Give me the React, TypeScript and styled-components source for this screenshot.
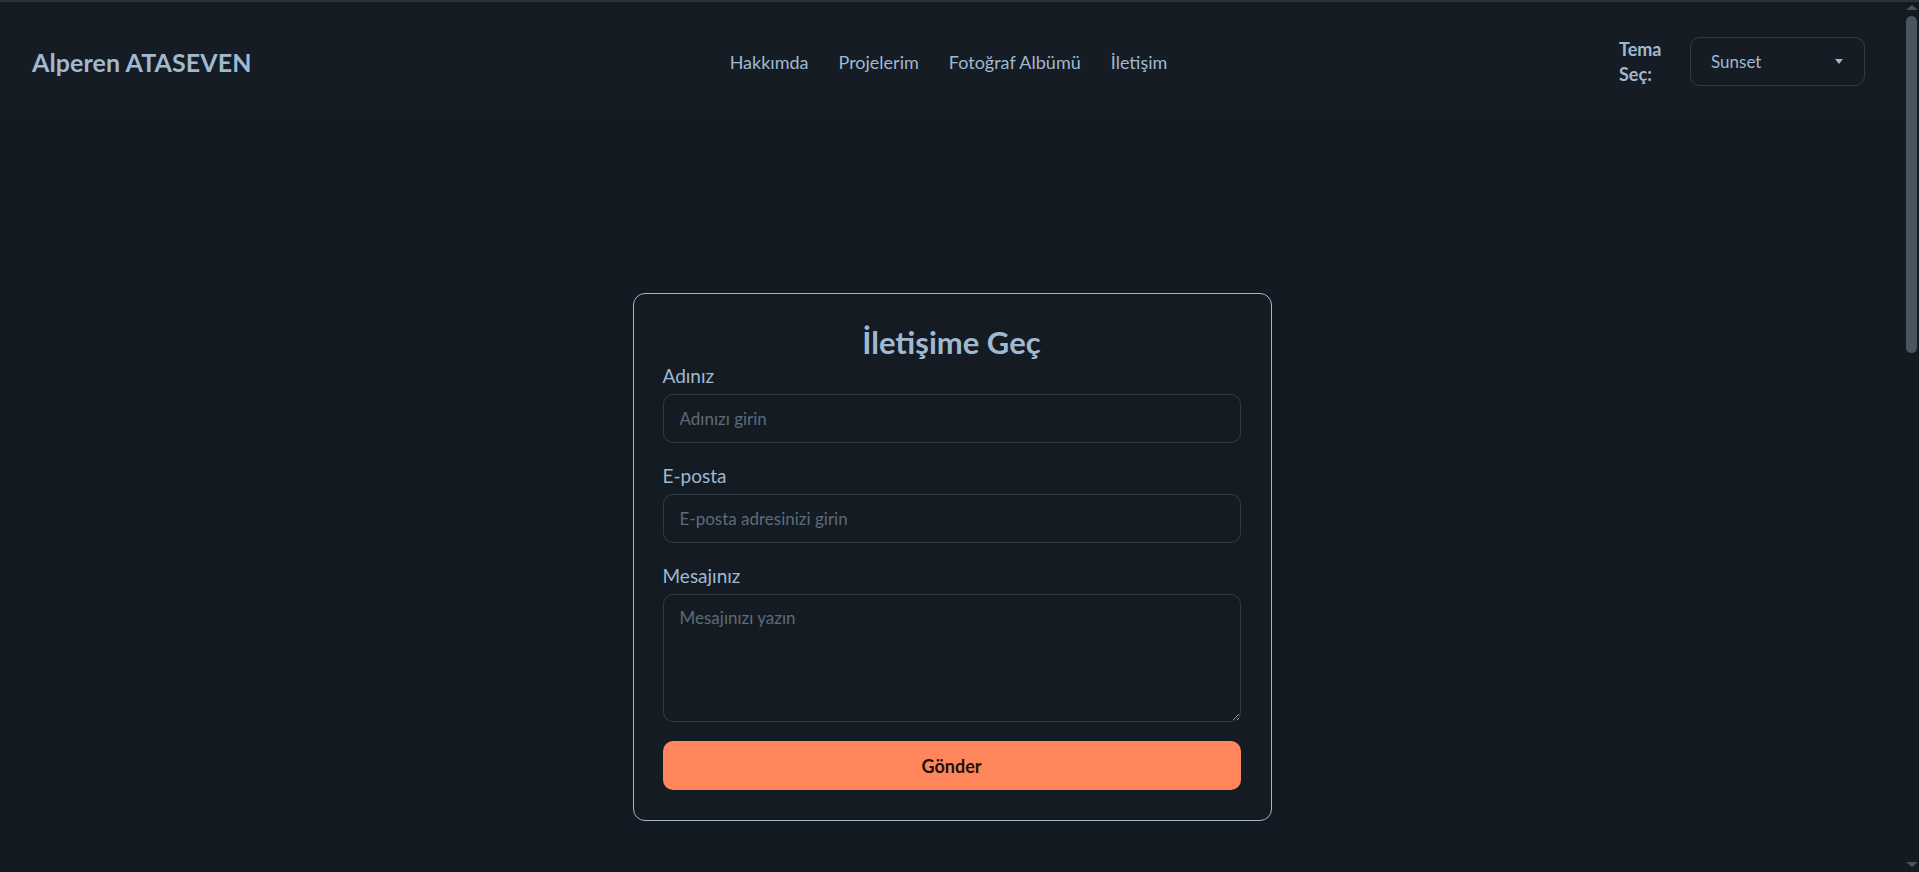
import styled, { createGlobalStyle } from "styled-components";

const GlobalStyle = createGlobalStyle`
  html,
  body {
    margin: 0;
    background: #131a21;
    color-scheme: dark;
  }

  body {
    color: #9fb9d1;
    font-family: "Lato", "Noto Sans", sans-serif;
  }

  * {
    box-sizing: border-box;
  }
`;

const NAV_LINKS = ["Hakkımda", "Projelerim", "Fotoğraf Albümü", "İletişim"];

const FIELDS = [
  { label: "Adınız", placeholder: "Adınızı girin", type: "text" },
  { label: "E-posta", placeholder: "E-posta adresinizi girin", type: "email" },
];

export default function App() {
  return (
    <>
      <GlobalStyle />
      <Frame>
        <Site>
          <Header>
            <Logo>Alperen ATASEVEN</Logo>

            <Nav>
              {NAV_LINKS.map((link) => (
                <NavLink key={link}>{link}</NavLink>
              ))}
            </Nav>

            <ThemePicker>
              <ThemeLabel>Tema Seç:</ThemeLabel>
              <ThemeSelect>
                <span>Sunset</span>
                <Caret />
              </ThemeSelect>
            </ThemePicker>
          </Header>

          <Main>
            <Card>
              <Title>İletişime Geç</Title>

              {FIELDS.map((field) => (
                <Field key={field.label}>
                  <Label>{field.label}</Label>
                  <Input type={field.type} placeholder={field.placeholder} />
                </Field>
              ))}

              <Field>
                <Label>Mesajınız</Label>
                <TextArea placeholder="Mesajınızı yazın" />
              </Field>

              <SubmitButton type="button">Gönder</SubmitButton>
            </Card>
          </Main>
        </Site>

        <ScrollBar>
          <ScrollArrow $dir="up" />
          <ScrollTrack>
            <ScrollThumb />
          </ScrollTrack>
          <ScrollArrow $dir="down" />
        </ScrollBar>
      </Frame>
    </>
  );
}

const Frame = styled.div`
  display: flex;
  height: 100vh;
  overflow: hidden;
  border-top: 2px solid #2f3337;
  background: #131a21;
`;

const Site = styled.div`
  flex: 1;
  min-width: 0;
`;

const Header = styled.header`
  display: grid;
  grid-template-columns: 1fr auto 1fr;
  align-items: center;
  height: 120px;
  padding: 0 39px 0 32px;
  border-bottom: 1px solid #10161c;
  background: #151c23;
`;

const Logo = styled.a`
  color: #9fb9d1;
  font-size: 25px;
  font-weight: 700;
  letter-spacing: 0.1px;
`;

const Nav = styled.nav`
  display: flex;
  align-items: center;
`;

const NavLink = styled.a`
  padding: 8px 15px;
  color: #9fb9d1;
  font-size: 18px;
  line-height: 24px;
`;

const ThemePicker = styled.div`
  display: flex;
  align-items: center;
  justify-content: flex-end;
  gap: 21px;
`;

const ThemeLabel = styled.span`
  width: 50px;
  color: #9fb9d1;
  font-size: 18px;
  font-weight: 700;
  line-height: 25px;
`;

const ThemeSelect = styled.div`
  display: flex;
  align-items: center;
  justify-content: space-between;
  width: 175px;
  height: 49px;
  padding: 0 21px 0 20px;
  border: 1px solid rgb(159 185 209 / 0.2);
  border-radius: 10px;
  color: #9fb9d1;
  font-size: 17px;
`;

const Caret = styled.span`
  width: 0;
  height: 0;
  border-top: 5px solid #9fb9d1;
  border-right: 4.5px solid transparent;
  border-left: 4.5px solid transparent;
`;

const Main = styled.main`
  display: flex;
  justify-content: center;
  padding-top: 171px;
`;

const Card = styled.form`
  display: flex;
  flex-direction: column;
  width: 639px;
  padding: 29px 30px 30px 29px;
  border: 1px solid #9fb9d1;
  border-radius: 12px;
  background: #141b22;
`;

const Title = styled.h2`
  margin: 0;
  color: #9fb9d1;
  font-size: 31px;
  font-weight: 700;
  line-height: 39px;
  text-align: center;
`;

const Field = styled.div`
  display: flex;
  flex-direction: column;
  gap: 4px;

  & + & {
    margin-top: 19px;
  }
`;

const Label = styled.label`
  color: #9fb9d1;
  font-size: 19px;
  line-height: 28px;
`;

const fieldStyles = `
  width: 100%;
  padding: 0 16px;
  border: 1px solid rgb(159 185 209 / 0.2);
  border-radius: 10px;
  background: #141b22;
  color: #9fb9d1;
  font-family: "Lato", "Noto Sans", sans-serif;
  font-size: 17px;
  outline: none;

  &::placeholder {
    color: #5c6c79;
  }
`;

const Input = styled.input`
  ${fieldStyles}
  height: 49px;
`;

const TextArea = styled.textarea`
  ${fieldStyles}
  height: 128px;
  padding-top: 11px;
  resize: vertical;
  line-height: 24px;
`;

const SubmitButton = styled.button`
  height: 49px;
  margin-top: 19px;
  border: 0;
  border-radius: 10px;
  background: #ff865b;
  color: #1b120e;
  font-family: "Lato", "Noto Sans", sans-serif;
  font-size: 18px;
  font-weight: 700;
  cursor: pointer;
`;

/* stand-in for the browser's dark vertical scrollbar */
const ScrollBar = styled.div`
  display: flex;
  flex-direction: column;
  width: 15px;
  background: #131a21;
`;

const ScrollArrow = styled.div<{ $dir: "up" | "down" }>`
  display: flex;
  align-items: ${({ $dir }) => ($dir === "up" ? "flex-start" : "flex-end")};
  justify-content: center;
  height: 14px;
  padding: ${({ $dir }) => ($dir === "up" ? "3px 0 0" : "0 0 5px")};

  &::before {
    content: "";
    width: 0;
    height: 0;
    border-right: 6px solid transparent;
    border-left: 6px solid transparent;
    ${({ $dir }) =>
      $dir === "up"
        ? "border-bottom: 5px solid #48555f;"
        : "border-top: 5px solid #48555f;"}
  }
`;

const ScrollTrack = styled.div`
  flex: 1;
  padding: 0 2px;
`;

const ScrollThumb = styled.div`
  height: 337px;
  border-radius: 6px;
  background: #48555f;
`;
